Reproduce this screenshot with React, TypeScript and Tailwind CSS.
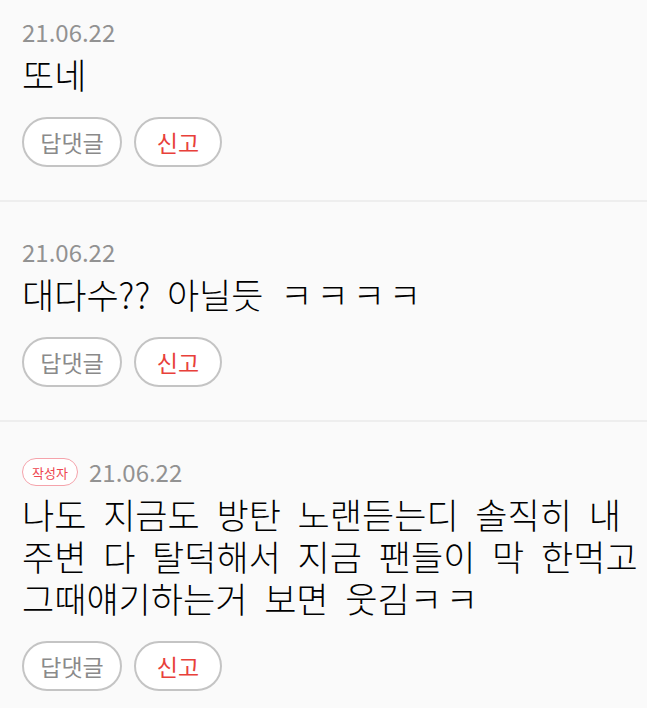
import React from "react";

type Comment = { author?: boolean; date: string; text: string };

const comments: Comment[] = [
  { date: "21.06.22", text: "또네" },
  { date: "21.06.22", text: "대다수?? 아닐듯 ㅋㅋㅋㅋ" },
  {
    author: true,
    date: "21.06.22",
    text: "나도 지금도 방탄 노랜듣는디 솔직히 내 주변 다 탈덕해서 지금 팬들이 막 한먹고 그때얘기하는거 보면 웃김ㅋㅋ",
  },
];

function renderText(t: string) {
  const parts = t.split(/(ㅋ+)/);
  return parts.map((p, i) =>
    p.startsWith("ㅋ") ? (
      <span key={i} className="tracking-[4px]">
        {p}
      </span>
    ) : (
      <React.Fragment key={i}>{p}</React.Fragment>
    )
  );
}

function Item({ c, first, last }: { c: Comment; first: boolean; last: boolean }) {
  return (
    <div
      className={
        "flex flex-col pl-[22px] pr-[6px] pb-[33px] " +
        (first ? "pt-[16px] " : "pt-[34px] ") +
        (last ? "" : "border-b-2 border-[#eeeeee]")
      }
    >
      <div className="flex h-[32px] items-center">
        {c.author && (
          <span className="mr-[11px] flex h-[28px] w-[56px] items-center justify-center rounded-full border border-[#f5a3ab] bg-white text-[13px] leading-none text-[#ee4550]">
            작성자
          </span>
        )}
        <span className="text-[24px] leading-[32px] text-[#929292]">{c.date}</span>
      </div>
      <p className="mt-[5px] break-keep text-[35px] font-light leading-[42px] text-black [word-spacing:9px]">
        {renderText(c.text)}
      </p>
      <div className="mt-[22px] flex gap-[12px]">
        <button className="flex h-[50px] w-[100px] items-center justify-center rounded-full border-2 border-[#c4c4c4] bg-white text-[23px] leading-none text-[#8a8a8a]">
          답댓글
        </button>
        <button className="flex h-[50px] w-[88px] items-center justify-center rounded-full border-2 border-[#c4c4c4] bg-white text-[23px] leading-none text-[#e8403a]">
          신고
        </button>
      </div>
    </div>
  );
}

export default function App() {
  return (
    <div
      className="min-h-[708px] w-[647px] bg-[#fafafa]"
      style={{ fontFamily: '"Noto Sans CJK KR", "Noto Sans", sans-serif' }}
    >
      {comments.map((c, i) => (
        <Item key={i} c={c} first={i === 0} last={i === comments.length - 1} />
      ))}
    </div>
  );
}
